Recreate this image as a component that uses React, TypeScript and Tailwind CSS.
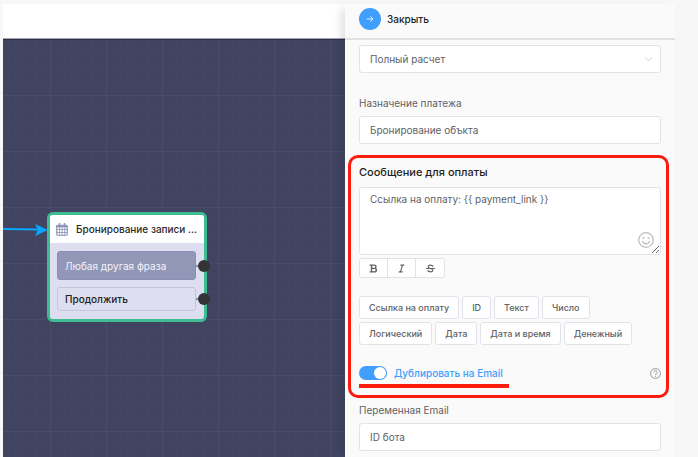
import { useState } from "react";

const variables = [
  ["Ссылка на оплату", "ID", "Текст", "Число"],
  ["Логический", "Дата", "Дата и время", "Денежный"],
];

const field =
  "block w-full h-7 rounded-[3px] border border-[#e2e3ea] bg-white px-[10px] text-[10px] leading-4 text-[#606266] outline-none";

function CalendarIcon() {
  return (
    <svg viewBox="0 0 24 26" className="h-[13px] w-3 shrink-0" fill="none" stroke="#8f95b8" aria-hidden="true">
      <path d="M7 0v6M17 0v6" strokeWidth="3" />
      <rect x="1.5" y="4.5" width="21" height="20" rx="2" strokeWidth="2.4" />
      <path d="M1 6.5h22" strokeWidth="5" />
      <path d="M1 13h22M1 19h22M7 9v16M12.3 9v16M17.5 9v16" strokeWidth="1.7" />
    </svg>
  );
}

function Port() {
  return (
    <span className="absolute left-full top-1/2 flex -translate-y-1/2 items-center">
      <span className="h-[2px] w-[2px] bg-[#8a8fae]" />
      <span className="h-3 w-3 rounded-full bg-[#333333]" />
    </span>
  );
}

function FlowCanvas() {
  return (
    <main className="relative flex-1 overflow-hidden border-t border-[#2b2f49] bg-[#404461] bg-[linear-gradient(to_right,#484c68_1px,transparent_1px),linear-gradient(to_bottom,#484c68_1px,transparent_1px),linear-gradient(to_right,#434763_1px,transparent_1px),linear-gradient(to_bottom,#434763_1px,transparent_1px)] bg-[length:56px_56px,56px_56px,14px_14px,14px_14px] bg-[position:47px_0,0_-1px,5px_0,0_-1px]">
      <svg className="absolute left-0 top-[184px] h-3 w-[45px]" viewBox="0 0 45 12" aria-hidden="true">
        <path d="M0 5L36 5.600" stroke="#08a6ff" strokeWidth="2" />
        <path d="M32 0L45 6L32 12L35 6Z" fill="#08a6ff" />
      </svg>
      <article className="absolute left-11 top-[172px] w-[160px] rounded-md border-[3px] border-[#3fbd92] bg-[#dddef0]">
        <header className="flex h-7 items-center gap-2 rounded-t-[3px] bg-white pl-[6px]">
          <CalendarIcon />
          <h2 className="whitespace-nowrap text-[10px] font-medium leading-4 text-[#2b2b2b]">Бронирование записи ...</h2>
        </header>
        <div className="flex flex-col gap-[7px] py-2 pl-[7px] pr-2">
          <div className="relative">
            <button type="button" className="block h-[29px] w-full rounded-[3px] border border-[#8b91b4] bg-[#9297b8] px-[7px] text-left text-[10px] leading-4 text-[#f3f3f8]">
              Любая другая фраза
            </button>
            <Port />
          </div>
          <div className="relative">
            <button type="button" className="block h-6 w-full rounded-[3px] border border-[#c3c5da] px-[7px] text-left text-[10px] font-medium leading-4 text-[#222222]">
              Продолжить
            </button>
            <Port />
          </div>
        </div>
      </article>
    </main>
  );
}

function FormatBar() {
  const cell = "flex h-[18px] items-center justify-center";
  return (
    <div className="mt-[3px] flex w-[86px] divide-x divide-[#e2e3ea] rounded-[3px] border border-[#e2e3ea] bg-white text-[#606266]">
      <button type="button" aria-label="Полужирный" className={`${cell} w-7`}>
        <svg viewBox="0 0 16 16" className="h-[9px] w-[9px]" fill="none" stroke="currentColor" strokeWidth="2.6" aria-hidden="true">
          <path d="M1 2h8.500a2.8 2.8 0 0 1 0 5.8H5M5 7.8h5a3.1 3.1 0 0 1 0 6.2H1M4.500 2v12" />
        </svg>
      </button>
      <button type="button" aria-label="Курсив" className={`${cell} w-7`}>
        <svg viewBox="0 0 16 16" className="h-[9px] w-[9px]" fill="none" stroke="currentColor" strokeWidth="2" aria-hidden="true">
          <path d="M6 2h7M3 14h7M9.8 2L6.2 14" />
        </svg>
      </button>
      <button type="button" aria-label="Зачёркнутый" className={`${cell} w-7`}>
        <svg viewBox="0 0 16 16" className="h-[9px] w-[9px]" fill="none" stroke="currentColor" strokeWidth="2" aria-hidden="true">
          <path d="M0 8h16M12 5V2M12 4.5C11 2.8 9.8 2 8 2 5.500 2 4 3.200 4 4.800 4 6.500 5.500 7.300 8 8s4 1.500 4 3.200S10.500 14 8 14c-1.900 0-3.300-.8-4-2.500M4 14v-3" />
        </svg>
      </button>
    </div>
  );
}

function PaymentMessage() {
  const [copy, setCopy] = useState(true);
  return (
    <section className="-ml-[11px] -mr-2 mt-[11px] rounded-[10px] border-[3px] border-[#fc1c0d] pb-[7px] pl-2 pr-[5px] pt-[5px]">
      <label htmlFor="message" className="block text-[11px] font-medium leading-[18px] text-[#1f1f1f]">
        Сообщение для оплаты
      </label>
      <div className="relative mt-[6px]">
        <textarea
          id="message"
          defaultValue="Ссылка на оплату: {{ payment_link }}"
          className="block h-[68px] w-full resize-y rounded-[3px] border border-[#e2e3ea] bg-white px-[10px] py-[3px] text-[10px] leading-4 text-[#606266] outline-none"
        />
        <button type="button" aria-label="Эмодзи" className="absolute bottom-[7px] right-[7px]">
          <svg viewBox="0 0 16 16" className="h-4 w-4" fill="none" stroke="#bdbdbd" strokeWidth="1.300" strokeLinecap="round" aria-hidden="true">
            <circle cx="8" cy="8" r="7.300" />
            <path d="M4.500 9.500c1.200 3 5.800 3 7 0" />
            <path d="M5.500 6v.1M10.500 6v.1" strokeWidth="1.900" />
          </svg>
        </button>
      </div>
      <FormatBar />
      <div className="mt-[18px] flex flex-col gap-[3px]">
        {variables.map((row) => (
          <div key={row[0]} className="flex gap-[3px]">
            {row.map((name) => (
              <button key={name} type="button" className="h-[23px] whitespace-nowrap rounded-[3px] border border-[#e2e3ea] bg-white px-[9px] text-[9px] font-medium leading-3 text-[#606266]">
                {name}
              </button>
            ))}
          </div>
        ))}
      </div>
      <div className="mt-5 flex items-center justify-between">
        <label className="flex items-center gap-[7px] text-[10px] font-medium leading-4 text-[#409eff]">
          <input
            type="checkbox"
            role="switch"
            checked={copy}
            onChange={(e) => setCopy(e.target.checked)}
            className="h-[14px] w-7 appearance-none rounded-full bg-[#c0c4cc] before:m-[1px] before:block before:h-3 before:w-3 before:rounded-full before:bg-white checked:bg-[#409eff] checked:before:ml-[15px]"
          />
          Дублировать на Email
        </label>
        <button type="button" aria-label="Справка">
          <svg viewBox="0 0 24 24" className="h-[11px] w-[11px]" fill="none" stroke="#8f9299" strokeWidth="2" aria-hidden="true">
            <circle cx="12" cy="12" r="10.800" />
            <path d="M8.300 9.500a3.700 3.500 0 1 1 5.600 3c-1.300.8-1.900 1.200-1.900 2.800M12 17v2.300" />
          </svg>
        </button>
      </div>
      <div className="mt-[3px] h-1 w-[150px] bg-[#fc1c0d]" />
    </section>
  );
}

export default function App() {
  return (
    <div className="flex min-h-screen bg-[#f7f7f7] pl-[3px] pr-[23px] pt-1 font-['Inter','Liberation_Sans',sans-serif]">
      <div className="flex min-w-0 flex-1 flex-col">
        <header className="h-[35px] border-b border-[#a3a6b2] bg-white" />
        <FlowCanvas />
      </div>
      <aside className="relative w-[330px] shrink-0 bg-[#fafafa] shadow-[-8px_0_8px_-4px_rgba(0,0,0,0.12)]">
        <header className="flex h-9 items-center border-b-2 border-[#e0e0e0] px-[14px] pb-1">
          <button type="button" className="flex items-center gap-[6px] text-[10px] font-medium leading-4 text-[#1f1f1f]">
            <span className="flex h-[22px] w-[22px] items-center justify-center rounded-full bg-[#409eff]">
              <svg viewBox="0 0 12 12" className="h-2 w-2" fill="none" stroke="white" strokeWidth="1.200" aria-hidden="true">
                <path d="M1 6h9.500M6.500 2l4 4-4 4" />
              </svg>
            </span>
            Закрыть
          </button>
        </header>
        <div className="px-[14px] pb-1 pt-[5px]">
          <div className="relative">
            <select aria-label="Тип расчета" className={`${field} appearance-none`}>
              <option>Полный расчет</option>
            </select>
            <svg viewBox="0 0 10 6" className="pointer-events-none absolute right-2 top-[11px] h-[6px] w-[9px]" fill="none" stroke="#c6c9cf" aria-hidden="true">
              <path d="M1 1l4 4 4-4" />
            </svg>
          </div>
          <label htmlFor="purpose" className="mb-[5px] mt-[22px] block text-[10px] leading-4 text-[#606266]">
            Назначение платежа
          </label>
          <input id="purpose" defaultValue="Бронирование объкта" className={field} />
          <PaymentMessage />
          <label htmlFor="email-var" className="mb-[5px] mt-1 block text-[10px] leading-4 text-[#606266]">
            Переменная Email
          </label>
          <input id="email-var" defaultValue="ID бота" className={field} />
        </div>
      </aside>
    </div>
  );
}
